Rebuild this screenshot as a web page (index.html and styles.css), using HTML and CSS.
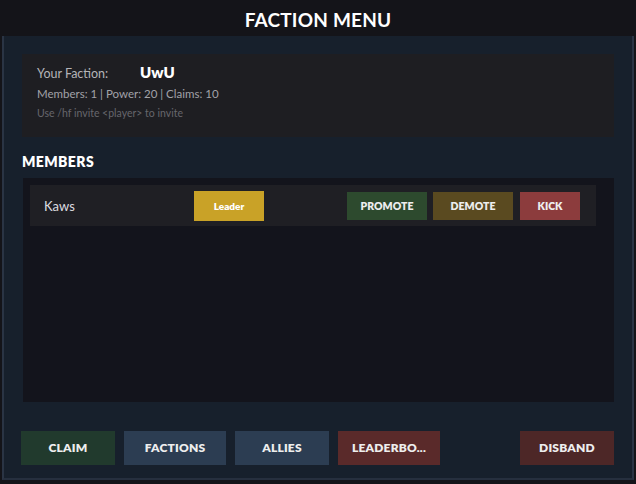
FILE: index.html
```html
<!DOCTYPE html>
<html lang="en">
<head>
	<meta charset="UTF-8">
	<title>Faction Menu</title>
	<link rel="stylesheet" href="styles.css">
</head>
<body>
	<!-- 标题 -->
	<div class="top">FACTION MENU</div>
	<!-- 主面板 -->
	<div class="panel">
		<div class="info">
			<div class="info-head">
				<span class="label">Your Faction:</span>
				<span class="name">UwU</span>
			</div>
			<div class="stats">Members: 1 | Power: 20 | Claims: 10</div>
			<div class="hint">Use /hf invite &lt;player&gt; to invite</div>
		</div>
		<h2 class="section">MEMBERS</h2>
		<div class="list">
			<div class="row">
				<span class="player">Kaws</span>
				<span class="rank">Leader</span>
				<div class="actions">
					<span class="act promote">PROMOTE</span>
					<span class="act demote">DEMOTE</span>
					<span class="act kick">KICK</span>
				</div>
			</div>
		</div>
		<!-- 底部按钮 -->
		<div class="bar">
			<span class="btn claim">CLAIM</span>
			<span class="btn factions">FACTIONS</span>
			<span class="btn allies">ALLIES</span>
			<span class="btn board">LEADERBO...</span>
			<span class="btn disband">DISBAND</span>
		</div>
	</div>
</body>
</html>
```

FILE: styles.css
```css
*{
	padding: 0;
	margin: 0;
	box-sizing: border-box;
}
body{
	background: #141419;
	font-family: Lato, "Noto Sans", sans-serif;
	color: #fff;
	height: 484px;
	overflow: hidden;
}
/*标题*/
.top{
	height: 36px;
	line-height: 40px;
	text-align: center;
	font-size: 19px;
	font-weight: 700;
	letter-spacing: .2px;
}
/*面板*/
.panel{
	margin: 0 2px;
	height: 444px;
	background: #17202c;
	border-left: 2px solid #2a3444;
	border-right: 2px solid #2a3444;
	border-bottom: 2px solid #262f3e;
	padding: 18px 18px 0 18px;
}
.info{
	height: 83px;
	background: #1e1e22;
	padding: 9px 15px 0;
}
.info-head{
	display: flex;
	align-items: baseline;
}
.label{
	width: 103px;
	font-size: 12.5px;
	color: #b4b4b8;
}
.name{
	font-size: 15px;
	font-weight: 800;
}
.stats{
	margin-top: 6px;
	font-size: 11.5px;
	color: #a2a2a8;
}
.hint{
	margin-top: 7px;
	font-size: 10.5px;
	color: #66666c;
}
.section{
	margin: 16px 0 7px;
	height: 18px;
	font-size: 14px;
	font-weight: 800;
	letter-spacing: .4px;
}
/*成员列表*/
.list{
	height: 224px;
	margin-left: 1px;
	background: #13141c;
	padding: 7px 18px 0 7px;
}
.row{
	height: 41px;
	background: #1f1f24;
	display: flex;
	align-items: center;
	padding: 0 16px 0 14px;
}
.player{
	width: 150px;
	font-size: 13px;
	color: #dcdce0;
}
.rank{
	width: 70px;
	height: 30px;
	line-height: 30px;
	text-align: center;
	background: #c9a227;
	font-size: 10px;
	font-weight: 800;
}
.actions{
	margin-left: auto;
	display: flex;
	gap: 6px;
}
.act{
	height: 28px;
	line-height: 28px;
	width: 80px;
	text-align: center;
	font-size: 10.5px;
	font-weight: 800;
	color: #eee;
}
.promote{
	background: #2d4a2e;
}
.demote{
	background: #5a4a20;
}
.kick{
	width: 60px;
	margin-left: 1px;
	background: #8c3c3d;
}
/*底部*/
.bar{
	margin-top: 29px;
	margin-left: -1px;
	display: flex;
	gap: 9px;
}
.btn{
	height: 34px;
	line-height: 34px;
	width: 94px;
	text-align: center;
	font-size: 12px;
	font-weight: 800;
	letter-spacing: .2px;
	color: #eee;
}
.claim{
	background: #213a2d;
}
.factions{
	width: 102px;
	background: #2c3d52;
}
.allies{
	background: #2c3d52;
}
.board{
	width: 102px;
	background: #5a2a2a;
}
.disband{
	margin-left: auto;
	background: #4d2727;
}
```
